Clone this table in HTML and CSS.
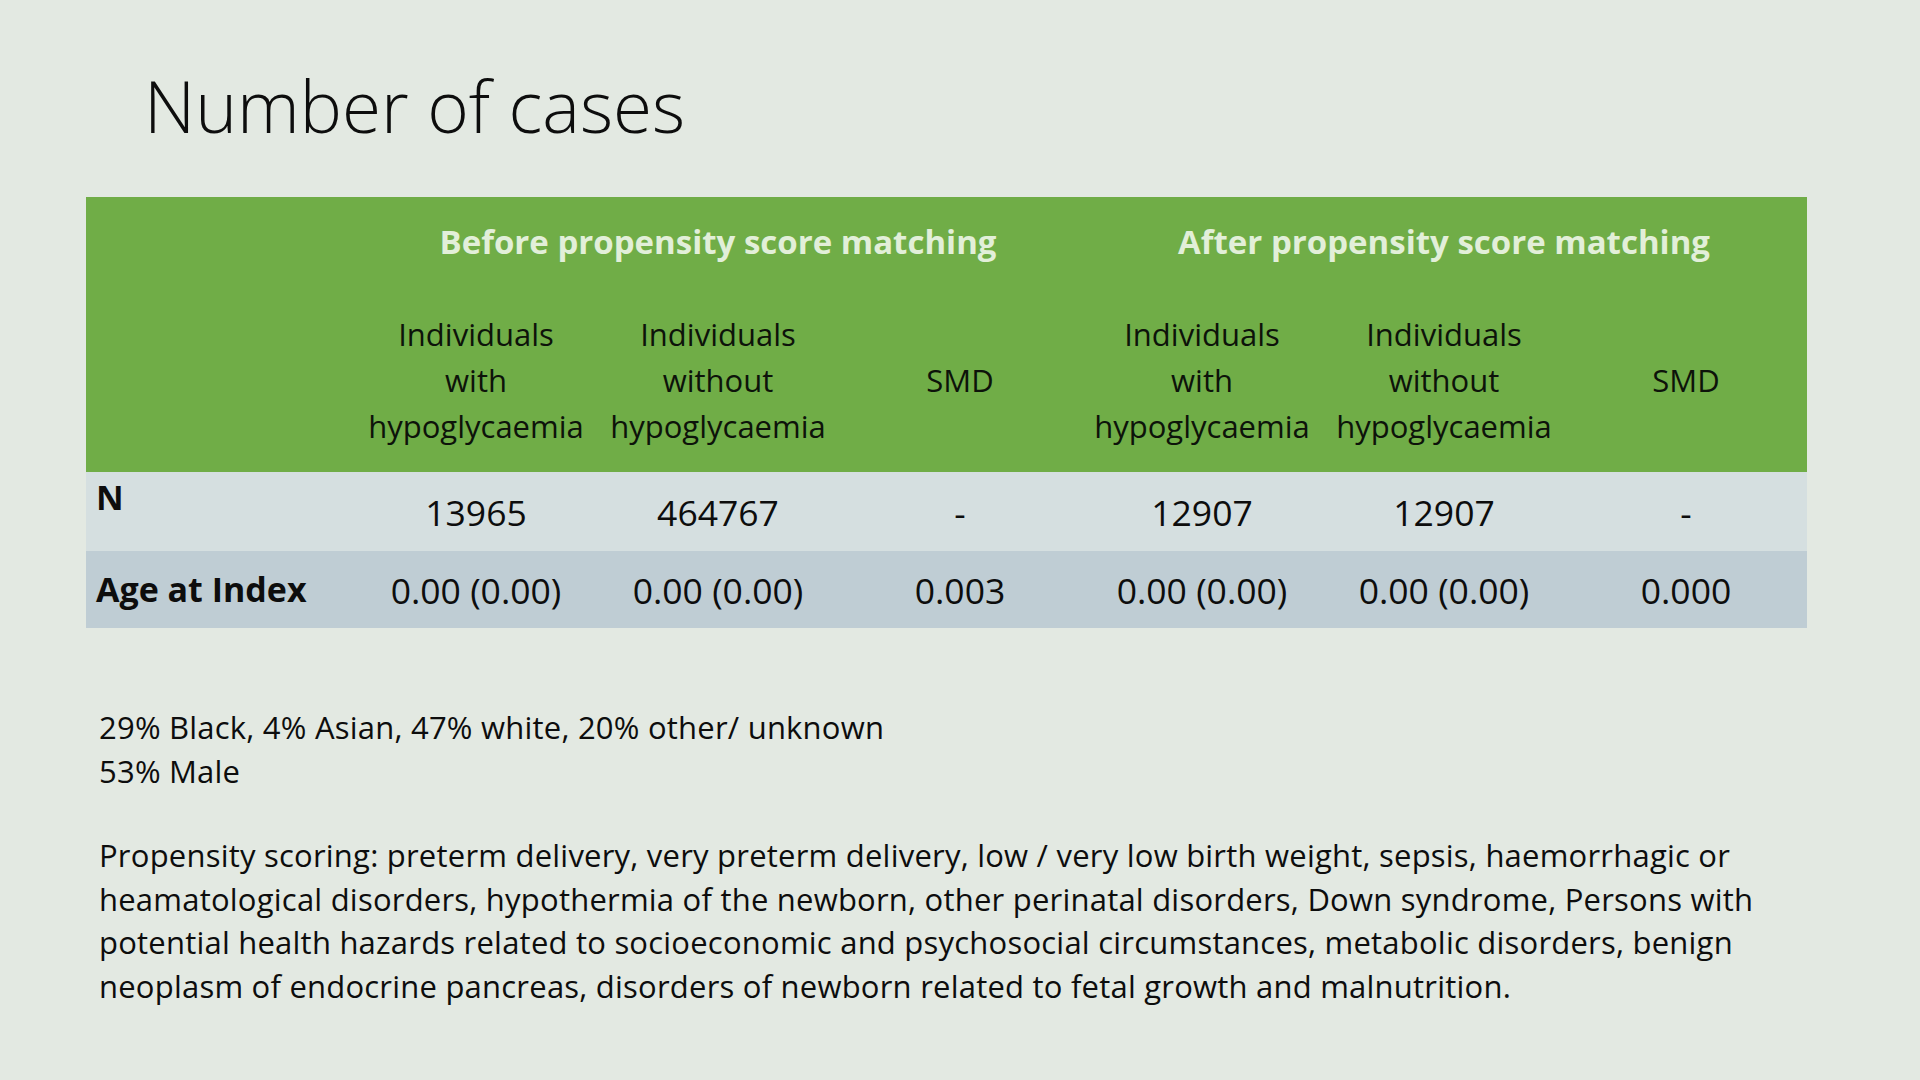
FILE: index.html
```html
<!DOCTYPE html>
<html lang="en">
<head>
<meta charset="utf-8">
<title>Number of cases</title>
<link rel="stylesheet" href="styles.css">
</head>
<body>
<main class="slide">
  <h1 class="title">Number of cases</h1>

  <section class="table">
    <div class="head">
      <div class="group g1">Before propensity score matching</div>
      <div class="group g2">After propensity score matching</div>

      <div class="sub c2">Individuals<br>with<br>hypoglycaemia</div>
      <div class="sub c3">Individuals<br>without<br>hypoglycaemia</div>
      <div class="sub c4">SMD</div>
      <div class="sub c5">Individuals<br>with<br>hypoglycaemia</div>
      <div class="sub c6">Individuals<br>without<br>hypoglycaemia</div>
      <div class="sub c7">SMD</div>
    </div>

    <div class="row row-n">
      <div class="label label-top">N</div>
      <div class="cell">13965</div>
      <div class="cell">464767</div>
      <div class="cell">-</div>
      <div class="cell">12907</div>
      <div class="cell">12907</div>
      <div class="cell">-</div>
    </div>

    <div class="row row-age">
      <div class="label">Age at Index</div>
      <div class="cell">0.00 (0.00)</div>
      <div class="cell">0.00 (0.00)</div>
      <div class="cell">0.003</div>
      <div class="cell">0.00 (0.00)</div>
      <div class="cell">0.00 (0.00)</div>
      <div class="cell">0.000</div>
    </div>
  </section>

  <section class="notes">
    <p>29% Black, 4% Asian, 47% white, 20% other/ unknown<br>53% Male</p>
    <p>Propensity scoring: preterm delivery, very preterm delivery, low / very low birth weight, sepsis, haemorrhagic or<br>heamatological disorders, hypothermia of the newborn, other perinatal disorders, Down syndrome, Persons with<br>potential health hazards related to socioeconomic and psychosocial circumstances, metabolic disorders, benign<br>neoplasm of endocrine pancreas, disorders of newborn related to fetal growth and malnutrition.</p>
  </section>
</main>
</body>
</html>
```

FILE: styles.css
```css
html, body {
  margin: 0;
  padding: 0;
}

body {
  background: #e3e9e2;
  font-family: "Open Sans", "Lato", sans-serif;
  color: #0d0d0d;
  width: 1920px;
  height: 1080px;
  overflow: hidden;
}

.slide {
  padding: 64px 0 0 0;
}

.title {
  margin: 0 0 49px 144px;
  font-weight: 300;
  font-size: 71px;
  line-height: 84px;
  color: #0d0d0d;
}

.table {
  margin-left: 86px;
  width: 1721px;
}

.head,
.row {
  display: grid;
  grid-template-columns: 269px repeat(6, 242px);
}

.head {
  background: #70ad47;
  padding: 26px 0 23px 0;
  grid-template-rows: 37px 138px;
  row-gap: 51px;
}

.group {
  grid-row: 1;
  font-weight: 700;
  font-size: 33px;
  line-height: 37px;
  color: #e2efd9;
  text-align: center;
  white-space: nowrap;
}

.g1 { grid-column: 2 / 5; }
.g2 { grid-column: 5 / 8; }

.sub {
  grid-row: 2;
  font-size: 31px;
  line-height: 46px;
  text-align: center;
  align-self: center;
  white-space: nowrap;
  color: #0d130a;
}

.c2 { grid-column: 2; }
.c3 { grid-column: 3; }
.c4 { grid-column: 4; }
.c5 { grid-column: 5; }
.c6 { grid-column: 6; }
.c7 { grid-column: 7; }

.row {
  align-items: center;
}

.row-n {
  background: #d5dfe0;
  height: 79px;
}

.row-age {
  background: #bfcdd4;
  height: 77px;
}

.label {
  padding-left: 10px;
  font-weight: 700;
  font-size: 34px;
  line-height: 43px;
  white-space: nowrap;
}

.label-top {
  align-self: start;
  padding-top: 4px;
}

.cell {
  text-align: center;
  font-size: 35.5px;
  line-height: 42px;
  white-space: nowrap;
}

.notes {
  margin: 78px 0 0 99px;
  font-size: 31px;
  letter-spacing: 0.22px;
  line-height: 43.6px;
  white-space: nowrap;
}

.notes p {
  margin: 0;
}

.notes p + p {
  margin-top: 40.8px;
}
```
